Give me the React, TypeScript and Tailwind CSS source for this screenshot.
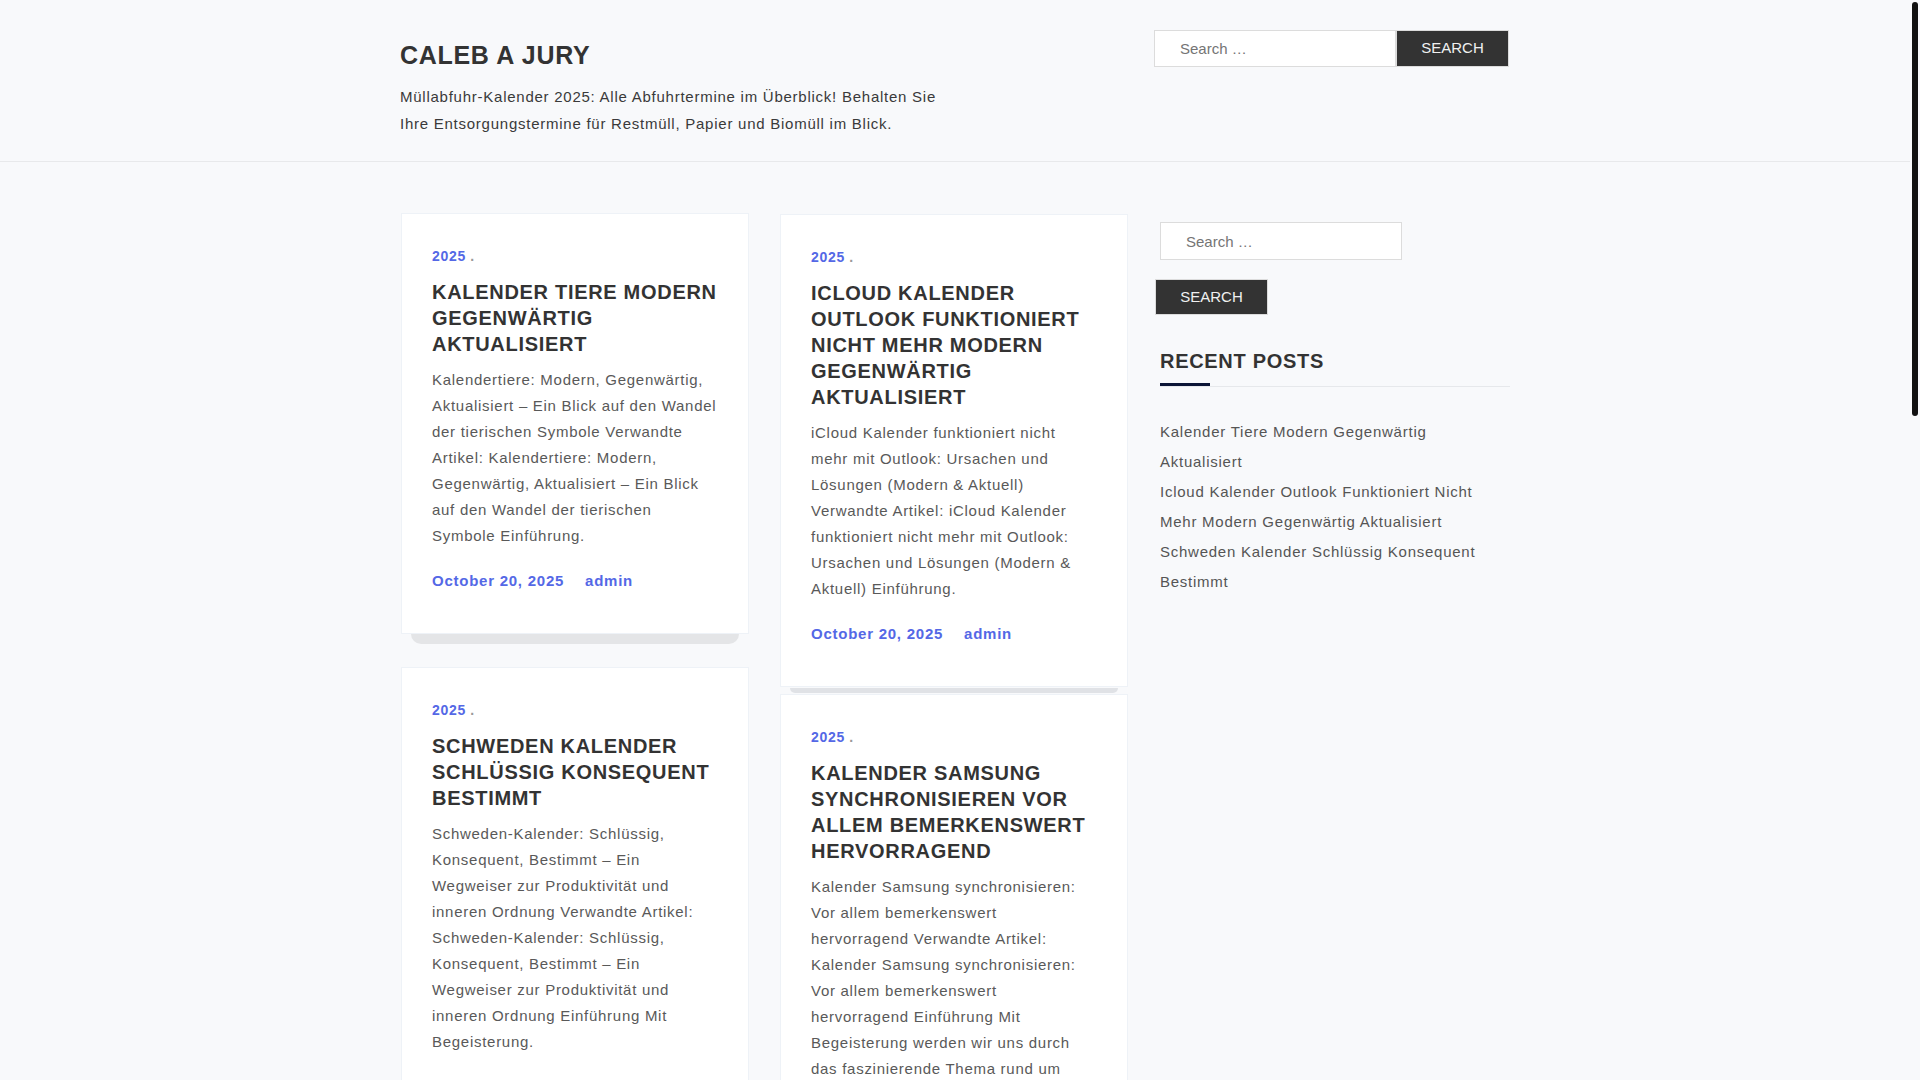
type Post = {
  title: string;
  excerpt: string;
};

const leftPosts: Post[] = [
  {
    title: "Kalender Tiere Modern Gegenwärtig Aktualisiert",
    excerpt:
      "Kalendertiere: Modern, Gegenwärtig, Aktualisiert – Ein Blick auf den Wandel der tierischen Symbole Verwandte Artikel: Kalendertiere: Modern, Gegenwärtig, Aktualisiert – Ein Blick auf den Wandel der tierischen Symbole Einführung.",
  },
  {
    title: "Schweden Kalender Schlüssig Konsequent Bestimmt",
    excerpt:
      "Schweden-Kalender: Schlüssig, Konsequent, Bestimmt – Ein Wegweiser zur Produktivität und inneren Ordnung Verwandte Artikel: Schweden-Kalender: Schlüssig, Konsequent, Bestimmt – Ein Wegweiser zur Produktivität und inneren Ordnung Einführung Mit Begeisterung.",
  },
  {
    title: "Kalender Ferien Bayern Übersichtlich Praktisch",
    excerpt:
      "Ferienkalender Bayern: Übersichtlich, Praktisch – Alle Schulferien und Feiertage auf einen Blick Verwandte Artikel: Ferienkalender Bayern: Übersichtlich, Praktisch Einführung.",
  },
];

const rightPosts: Post[] = [
  {
    title: "Icloud Kalender Outlook Funktioniert Nicht Mehr Modern Gegenwärtig Aktualisiert",
    excerpt:
      "iCloud Kalender funktioniert nicht mehr mit Outlook: Ursachen und Lösungen (Modern & Aktuell) Verwandte Artikel: iCloud Kalender funktioniert nicht mehr mit Outlook: Ursachen und Lösungen (Modern & Aktuell) Einführung.",
  },
  {
    title: "Kalender Samsung Synchronisieren Vor Allem Bemerkenswert Hervorragend",
    excerpt:
      "Kalender Samsung synchronisieren: Vor allem bemerkenswert hervorragend Verwandte Artikel: Kalender Samsung synchronisieren: Vor allem bemerkenswert hervorragend Einführung Mit Begeisterung werden wir uns durch das faszinierende Thema rund um Kalender Samsung synchronisieren: Vor allem bemerkenswert hervorragend navigieren.",
  },
  {
    title: "Mondkalender Garten Sinnvoll Natürlich Erfolgreich",
    excerpt:
      "Mondkalender für den Garten: Sinnvoll, Natürlich, Erfolgreich – Säen und Ernten im Rhythmus des Mondes Verwandte Artikel: Mondkalender für den Garten Einführung.",
  },
];

const recentPosts = [
  "Kalender Tiere Modern Gegenwärtig Aktualisiert",
  "Icloud Kalender Outlook Funktioniert Nicht Mehr Modern Gegenwärtig Aktualisiert",
  "Schweden Kalender Schlüssig Konsequent Bestimmt",
];

function PostCard({ post, short }: { post: Post; short?: boolean }) {
  return (
    <div>
      <article className="bg-white border border-[#eef2f7] px-[30px] pt-[32px] pb-[39px]">
        <div className="text-[14px] leading-[20px] font-bold tracking-[0.75px]">
          <a className="text-[#5468e6]">2025</a>
          <span className="ml-[4px] text-[#9a9a9a]">.</span>
        </div>
        <h2 className="mt-[13px] text-[20px] leading-[26px] font-bold uppercase tracking-[0.7px] text-[#333]">
          {post.title}
        </h2>
        <p className="mt-[10px] text-[15px] leading-[26px] tracking-[0.72px] text-[#595959]">{post.excerpt}</p>
        <div className="mt-[19px] flex gap-[21px] text-[15px] leading-[26px] font-bold tracking-[0.75px] text-[#5468e6]">
          <a>October 20, 2025</a>
          <a>admin</a>
        </div>
      </article>
      {short ? (
        <div className="mx-[10px] mt-[1px] h-[5px] rounded-b-[6px] bg-[#e0e2e6]" />
      ) : (
        <div className="mx-[10px] h-[10px] rounded-b-[10px] bg-[#e4e5e7]" />
      )}
    </div>
  );
}

export default function App() {
  return (
    <div className="flex h-screen bg-[#f8f9fb] font-['Liberation_Sans',Arial,sans-serif]">
      <div className="flex-1 overflow-y-auto [scrollbar-width:none]">
        <header className="border-b border-[#e8e9eb]">
          <div className="mx-auto flex w-[1110px] justify-between pt-[30px] pb-[24px]">
            <div className="w-[555px] pt-[10px]">
              <h1 className="text-[25px] leading-[30px] font-bold uppercase tracking-[0.7px] text-[#333]">
                Caleb A Jury
              </h1>
              <p className="mt-[13px] text-[15px] leading-[27px] tracking-[0.75px] text-[#3a3a3a]">
                Müllabfuhr-Kalender 2025: Alle Abfuhrtermine im Überblick! Behalten Sie Ihre Entsorgungstermine für
                Restmüll, Papier und Biomüll im Blick.
              </p>
            </div>
            <form className="mr-[1px] flex h-[37px]" onSubmit={(e) => e.preventDefault()}>
              <input
                type="search"
                placeholder="Search …"
                className="h-full w-[242px] border border-[#dcdcdc] bg-white pl-[25px] text-[15px] text-[#333] placeholder:text-[#757575] focus:outline-none"
              />
              <button className="h-full w-[113px] border border-[#dcdcdc] bg-[#333] text-[15px] uppercase text-[#f0f0f0]">
                Search
              </button>
            </form>
          </div>
        </header>

        <main className="mx-auto flex w-[1110px] pt-[51px] pb-[60px]">
          <div className="flex w-[730px] gap-[31px]">
            <div className="ml-[1px] flex w-[348px] flex-col gap-[23px]">
              {leftPosts.map((p) => (
                <PostCard key={p.title} post={p} />
              ))}
            </div>
            <div className="mt-[1px] flex w-[348px] flex-col gap-[1px]">
              {rightPosts.map((p) => (
                <PostCard key={p.title} post={p} short />
              ))}
            </div>
          </div>

          <aside className="ml-[30px] w-[350px] pt-[9px]">
            <form onSubmit={(e) => e.preventDefault()}>
              <input
                type="search"
                placeholder="Search …"
                className="block h-[38px] w-[242px] border border-[#dcdcdc] bg-white pl-[25px] text-[15px] text-[#333] placeholder:text-[#757575] focus:outline-none"
              />
              <button className="-ml-[5px] mt-[19px] block h-[36px] w-[113px] border border-[#dcdcdc] bg-[#333] text-[15px] uppercase text-[#f0f0f0]">
                Search
              </button>
            </form>
            <h2 className="relative mt-[33px] border-b border-[#e6e8eb] pb-[12px] text-[20px] leading-[26px] font-bold uppercase tracking-[0.7px] text-[#333]">
              Recent Posts
              <span className="absolute bottom-0 left-0 h-[3px] w-[50px] bg-[#0b1536]" />
            </h2>
            <ul className="mt-[30px] text-[15px] leading-[30px] tracking-[0.75px] text-[#555]">
              {recentPosts.map((t) => (
                <li key={t}>
                  <a>{t}</a>
                </li>
              ))}
            </ul>
          </aside>
        </main>
      </div>
      <div className="w-[10px] px-[2px] pt-[2px]">
        <div className="h-[414px] rounded-full bg-[#111]" />
      </div>
    </div>
  );
}
